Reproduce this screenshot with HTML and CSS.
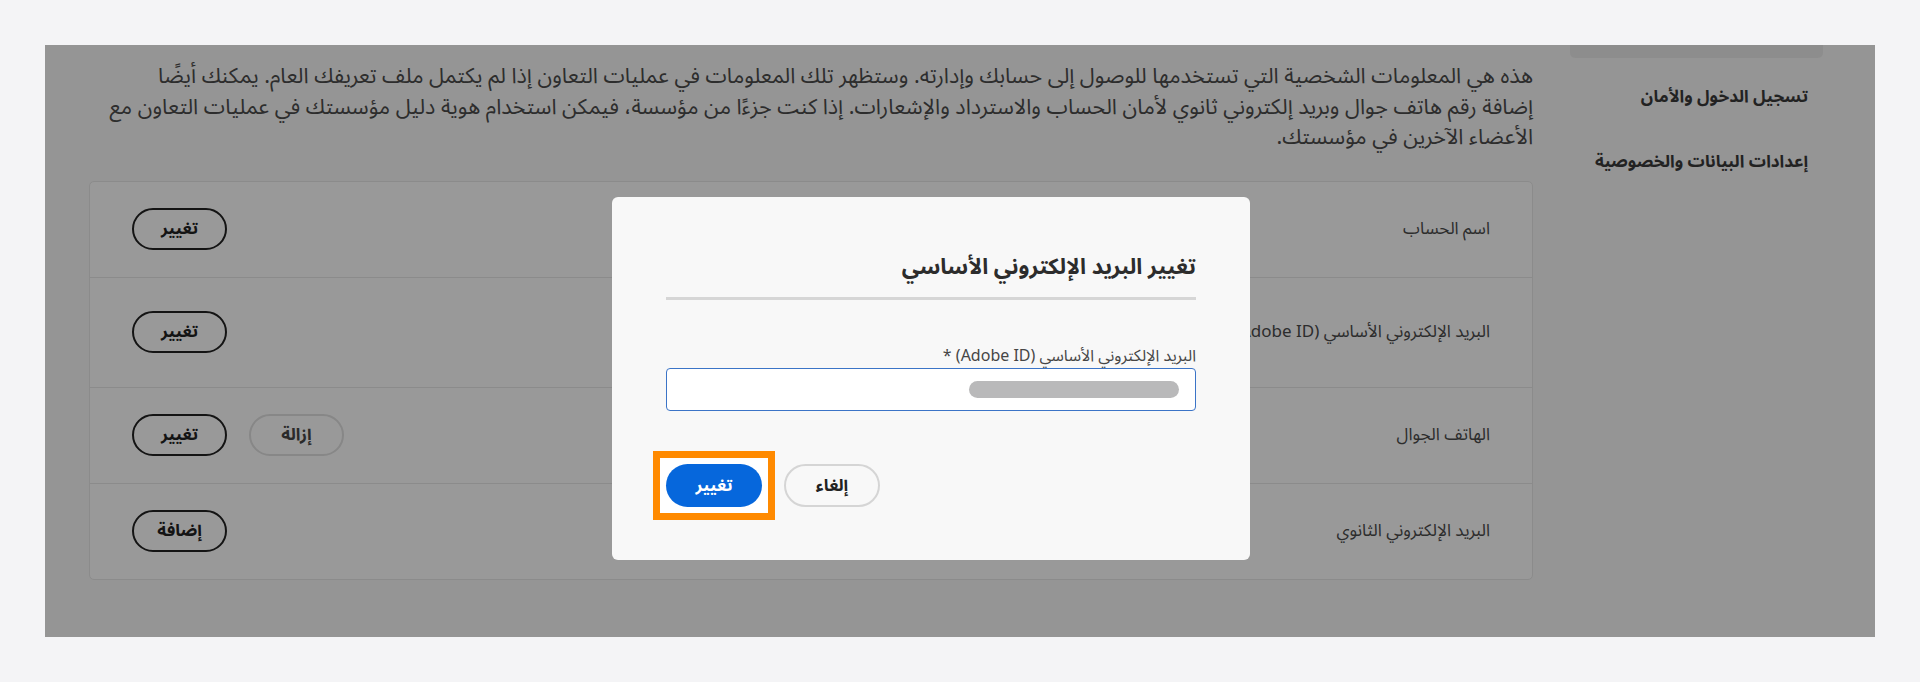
FILE: index.html
```html
<!DOCTYPE html>
<html lang="ar" dir="rtl">
<head>
    <meta charset="utf-8" />
    <link rel="stylesheet" href="styles.css">
</head>
<body>
<div class="frame">
    <div class="nav">
        <div class="nav-top"></div>
        <div class="nav-item">تسجيل الدخول والأمان</div>
        <div class="nav-item">إعدادات البيانات والخصوصية</div>
    </div>
    <div class="main">
        <p class="intro">هذه هي المعلومات الشخصية التي تستخدمها للوصول إلى حسابك وإدارته. وستظهر تلك المعلومات في عمليات التعاون إذا لم يكتمل ملف تعريفك العام. يمكنك أيضًا<br>
            إضافة رقم هاتف جوال وبريد إلكتروني ثانوي لأمان الحساب والاسترداد والإشعارات. إذا كنت جزءًا من مؤسسة، فيمكن استخدام هوية دليل مؤسستك في عمليات التعاون مع<br>
            الأعضاء الآخرين في مؤسستك.</p>
        <div class="card">
            <div class="row">
                <span class="row-label">اسم الحساب</span>
                <div class="actions">
                    <button class="btn">تغيير</button>
                </div>
            </div>
            <div class="row row-tall">
                <span class="row-label">البريد الإلكتروني الأساسي (Adobe ID)</span>
                <div class="actions">
                    <button class="btn">تغيير</button>
                </div>
            </div>
            <div class="row">
                <span class="row-label">الهاتف الجوال</span>
                <div class="actions">
                    <button class="btn btn-light">إزالة</button>
                    <button class="btn">تغيير</button>
                </div>
            </div>
            <div class="row">
                <span class="row-label">البريد الإلكتروني الثانوي</span>
                <div class="actions">
                    <button class="btn">إضافة</button>
                </div>
            </div>
        </div>
    </div>
    <div class="backdrop"></div>
    <div class="dialog">
        <h2 class="dialog-title">تغيير البريد الإلكتروني الأساسي</h2>
        <div class="dialog-divider"></div>
        <div class="field-label">البريد الإلكتروني الأساسي (Adobe ID) *</div>
        <div class="field-input"><span class="blur"></span></div>
        <div class="dialog-buttons">
            <button class="dbtn dbtn-cancel">إلغاء</button>
            <span class="highlight"><button class="dbtn dbtn-primary">تغيير</button></span>
        </div>
    </div>
</div>
</body>
</html>
```

FILE: styles.css
```css
*{
    box-sizing: border-box;
}
body{
    margin: 0;
    background-color: #f4f4f6;
    font-family: "Noto Sans Arabic", "Noto Sans", "DejaVu Sans", sans-serif;
    color: #4b4b4b;
}
.frame{
    position: relative;
    display: flex;
    gap: 37px;
    margin: 45px 45px 0;
    height: 592px;
    padding: 0 52px 0 44px;
    background-color: #f8f8f8;
    overflow: hidden;
}
.nav{
    width: 253px;
    flex: none;
}
.nav-top{
    height: 13px;
    background-color: #ececec;
    border-radius: 0 0 5px 5px;
}
.nav-item{
    padding-right: 15px;
    font-size: 17px;
    font-weight: bold;
    color: #3a3a3a;
    line-height: 26px;
    margin-top: 26px;
}
.nav-item + .nav-item{
    margin-top: 39px;
}
.main{
    flex: 1;
}
.intro{
    margin: 16px 0 0;
    font-size: 21.5px;
    line-height: 30.5px;
    white-space: nowrap;
}
.card{
    margin-top: 28px;
    background-color: #fff;
    border: 1px solid #e8e8e8;
    border-radius: 5px;
}
.row{
    display: flex;
    align-items: center;
    justify-content: space-between;
    height: 96px;
    padding: 0 42px;
    border-top: 1px solid #e8e8e8;
}
.row:first-child{
    border-top: none;
    height: 95px;
}
.row-tall{
    height: 110px;
}
.row-label{
    font-size: 17px;
}
.actions{
    display: flex;
    gap: 22px;
}
.btn{
    height: 42px;
    min-width: 95px;
    padding: 0 16px;
    border: 2px solid #222;
    border-radius: 21px;
    background: transparent;
    font-family: inherit;
    font-size: 17px;
    font-weight: bold;
    color: #222;
}
.btn-light{
    border-color: #e1e1e1;
    color: #464646;
}
.backdrop{
    position: absolute;
    inset: 0;
    background-color: rgba(0, 0, 0, 0.4);
}
.dialog{
    position: absolute;
    left: 567px;
    top: 152px;
    width: 638px;
    height: 363px;
    padding: 54px 54px 0;
    background-color: #f8f8f8;
    border-radius: 6px;
}
.dialog-title{
    margin: 0;
    font-size: 22px;
    line-height: 32px;
    font-weight: bold;
    color: #2c2c2c;
}
.dialog-divider{
    height: 3px;
    margin-top: 14px;
    background-color: #d6d6d6;
}
.field-label{
    margin-top: 45px;
    font-size: 16px;
    line-height: 22px;
    color: #464646;
}
.field-input{
    display: flex;
    align-items: center;
    height: 43px;
    margin-top: 1px;
    padding-right: 16px;
    background-color: #fff;
    border: 1px solid #3b74c7;
    border-radius: 4px;
}
.blur{
    width: 210px;
    height: 17px;
    border-radius: 9px;
    background-color: #b9b9ba;
}
.dialog-buttons{
    display: flex;
    justify-content: flex-end;
    align-items: center;
    gap: 9px;
    margin-top: 53px;
}
.dbtn{
    display: block;
    width: 96px;
    height: 43px;
    border-radius: 22px;
    font-family: inherit;
    font-size: 17px;
    font-weight: bold;
}
.dbtn-cancel{
    border: 2px solid #d5d5d5;
    background-color: transparent;
    color: #222;
}
.dbtn-primary{
    border: none;
    background-color: #0667dc;
    color: #fff;
}
/* annotation box round the confirm button */
.highlight{
    display: block;
    margin: -13px 0 -13px -13px;
    padding: 6px;
    border: 7px solid #ff8a00;
    background-color: #fff;
}
```
